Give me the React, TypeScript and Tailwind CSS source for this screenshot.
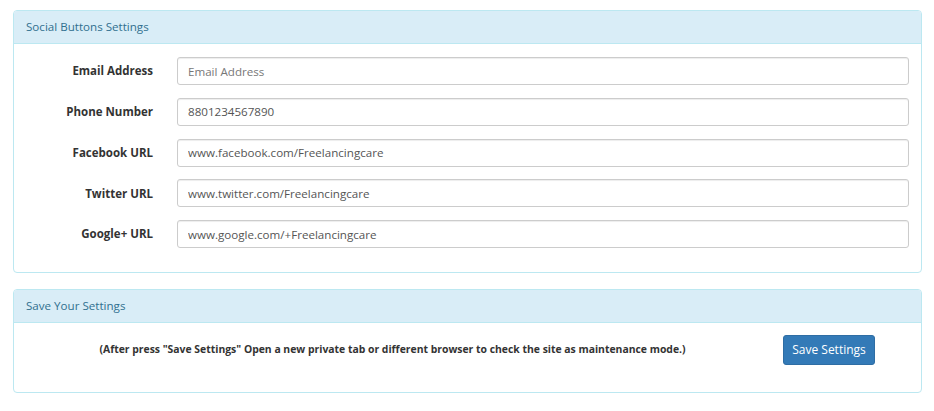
import React from "react";

const fields = [
  { label: "Email Address", value: "", placeholder: "Email Address" },
  { label: "Phone Number", value: "8801234567890", placeholder: "" },
  { label: "Facebook URL", value: "www.facebook.com/Freelancingcare", placeholder: "" },
  { label: "Twitter URL", value: "www.twitter.com/Freelancingcare", placeholder: "" },
  { label: "Google+ URL", value: "www.google.com/+Freelancingcare", placeholder: "" },
];

function PanelHeading({ title }: { title: string }) {
  return (
    <div className="h-[33px] flex items-center px-[12px] bg-[#d9edf7] border-b border-[#bce8f1] rounded-t-[3px] text-[#31708f] text-[11.6px]">
      {title}
    </div>
  );
}

export default function App() {
  return (
    <div
      className="w-[934px] h-[411px] bg-white pt-[10px] pl-[13px] pr-[12px]"
      style={{ fontFamily: '"Open Sans", "Liberation Sans", sans-serif' }}
    >
      {/* Social buttons */}
      <div className="border border-[#bce8f1] rounded-[4px]">
        <PanelHeading title="Social Buttons Settings" />
        <div className="pt-[13px] pb-[24px] pr-[12px] flex flex-col gap-[12.75px]">
          {fields.map((f) => (
            <div key={f.label} className="flex items-center">
              <label className="w-[139px] text-right text-[11.5px] font-bold text-[#333]">
                {f.label}
              </label>
              <input
                readOnly
                value={f.value}
                placeholder={f.placeholder}
                className="ml-[24px] flex-1 h-[28px] px-[10px] border border-[#ccc] rounded-[3px] text-[11.6px] text-[#555] placeholder:text-[#777] shadow-[inset_0_1px_1px_rgba(0,0,0,0.075)] outline-none"
              />
            </div>
          ))}
        </div>
      </div>

      {/* Save */}
      <div className="mt-[16px] border border-[#bce8f1] rounded-[4px]">
        <PanelHeading title="Save Your Settings" />
        <div className="pt-[12px] pb-[27px] flex items-center">
          <div className="w-[757px] text-center text-[10.4px] font-bold text-[#333]">
            (After press "Save Settings" Open a new private tab or different browser to check the site as maintenance mode.)
          </div>
          <button className="ml-[12px] w-[92px] h-[30px] bg-[#337ab7] border border-[#2e6da4] rounded-[3px] text-white text-[12px]">
            Save Settings
          </button>
        </div>
      </div>
    </div>
  );
}
